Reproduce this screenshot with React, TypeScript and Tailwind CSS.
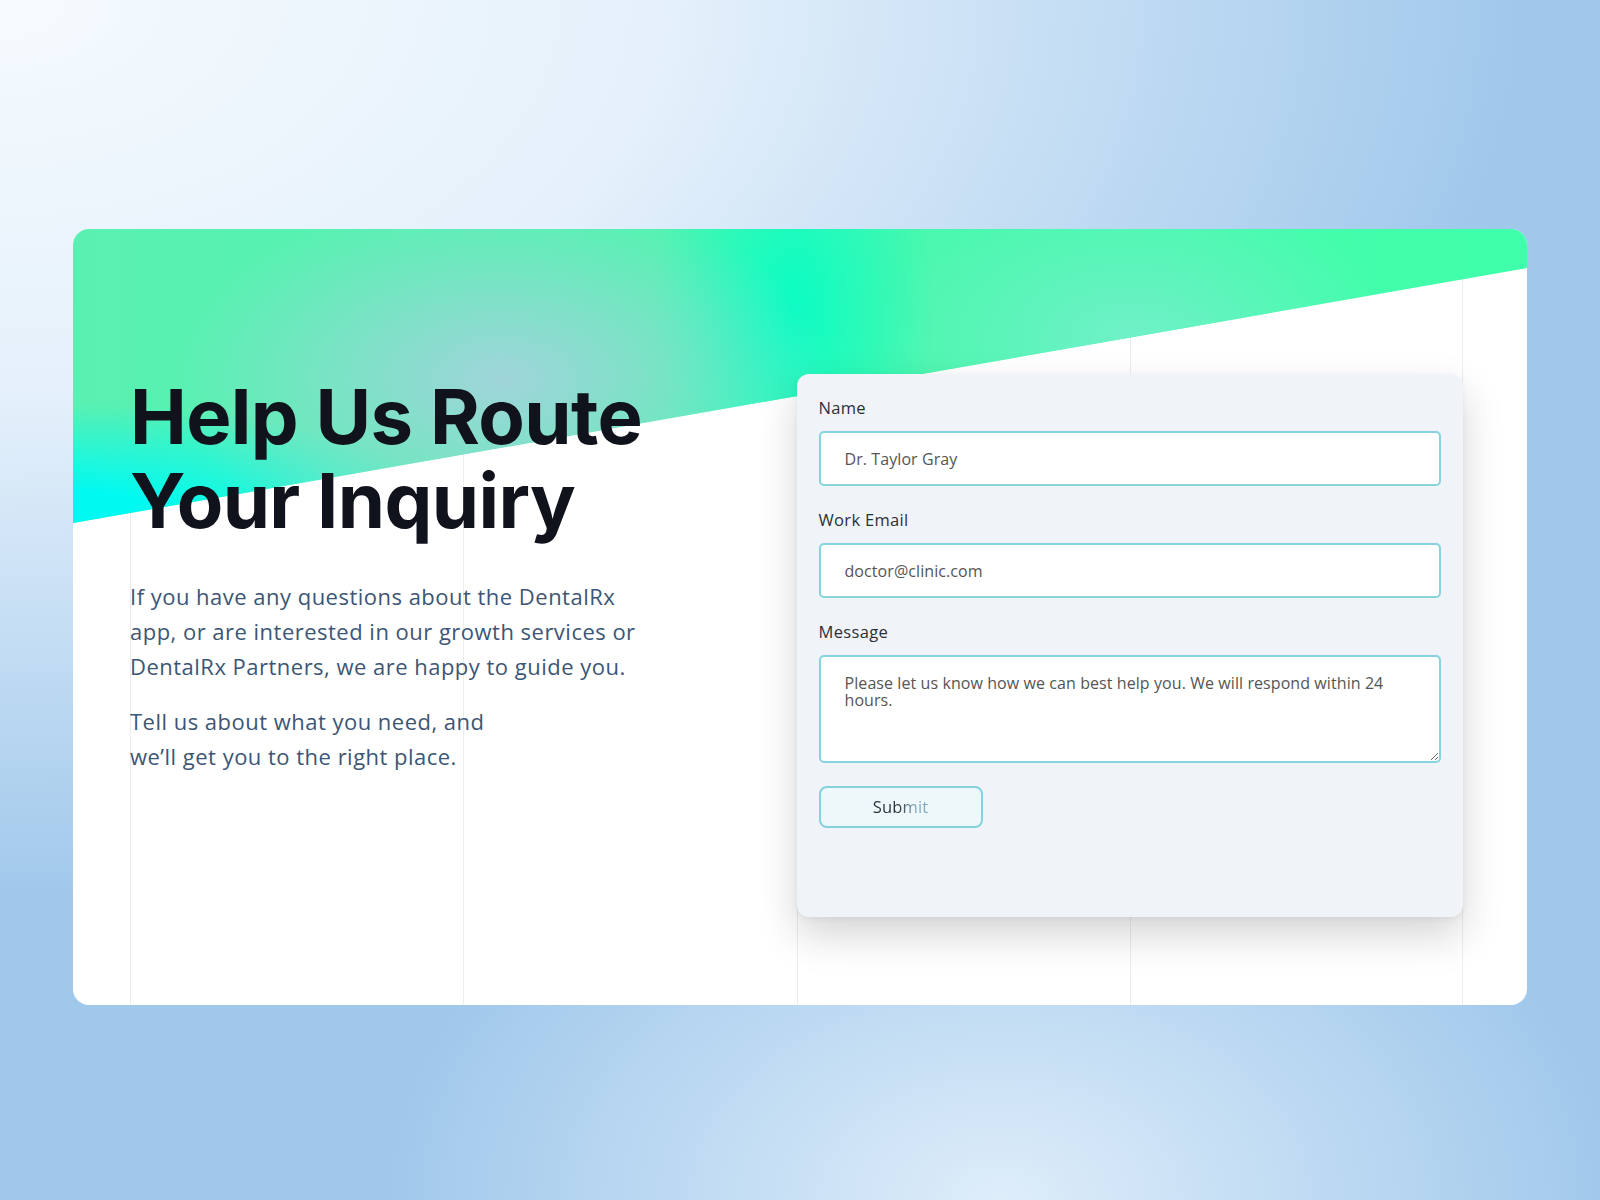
import type { ReactNode } from 'react'

const body = "font-['Open_Sans',sans-serif]"

function Field({ label, children }: { label: string; children: ReactNode }) {
  return (
    <div className="flex flex-col gap-[11px]">
      <label className={`${body} text-[16.5px] leading-6 tracking-[0.02em] text-[#2a2f3a]`}>{label}</label>
      {children}
    </div>
  )
}

const inputCls = `${body} w-full rounded-[5px] border-2 border-[#86d4de] bg-white text-[16px] tracking-[0.005em] text-[#555] outline-none`

export default function App() {
  return (
    <div className="min-h-screen w-full px-[73px] pt-[229px] pb-[195px] [background-image:radial-gradient(ellipse_620px_420px_at_1000px_1200px,rgba(222,237,250,1),rgba(222,237,250,0)),radial-gradient(ellipse_1700px_1000px_at_0px_0px,#f6fbfe_0%,#e4f0fb_40%,#a0c8eb_90%)]">
      <div className="relative h-[776px] overflow-hidden rounded-2xl bg-white">
        {/* column guides */}
        <div className="pointer-events-none absolute inset-y-0 left-[57px] right-[64px] grid grid-cols-4">
          <div className="border-l border-black/[0.07]" />
          <div className="border-l border-black/[0.07]" />
          <div className="border-l border-black/[0.07]" />
          <div className="border-x border-black/[0.07]" />
        </div>

        {/* diagonal gradient band */}
        <div className="absolute inset-x-0 top-0 h-[294px] [clip-path:polygon(0_0,100%_0,100%_39px,0_294px)] [background-image:radial-gradient(ellipse_330px_190px_at_430px_150px,rgba(160,212,218,1)_0%,rgba(160,212,218,0)_100%),radial-gradient(ellipse_380px_110px_at_0px_285px,rgba(0,250,242,1)_20%,rgba(0,250,242,0)_100%),radial-gradient(ellipse_140px_260px_at_720px_80px,rgba(10,253,196,1)_0%,rgba(10,253,196,0)_100%),radial-gradient(ellipse_260px_160px_at_1060px_110px,rgba(112,240,200,1)_0%,rgba(112,240,200,0)_100%),linear-gradient(90deg,#5af0b2_0%,#4ef5ae_45%,#3fffaa_100%)]" />

        <div className="relative grid grid-cols-2 pl-[57px] pr-[64px] pt-[145px]">
          <div>
            <h1 className="font-['Inter',sans-serif] text-[76px] font-bold leading-[84px] tracking-[-0.008em] text-[#10131b]">
              Help Us Route
              <br />
              Your Inquiry
            </h1>
            <div className={`${body} mt-[37px] text-[22px] leading-[35px] tracking-[0.022em] text-[#3d5675]`}>
              <p>
                If you have any questions about the DentalRx
                <br />
                app, or are interested in our growth services or
                <br />
                DentalRx Partners, we are happy to guide you.
              </p>
              <p className="mt-[20px]">
                Tell us about what you need, and
                <br />
                we’ll get you to the right place.
              </p>
            </div>
          </div>

          <form className="flex h-[543px] flex-col gap-[22px] rounded-xl bg-[#f0f4f8] p-[22px] shadow-[0_18px_40px_rgba(0,0,0,0.17),0_2px_6px_rgba(0,0,0,0.05)]">
            <Field label="Name">
              <input type="text" defaultValue="Dr. Taylor Gray" className={`${inputCls} h-[55px] pl-[24px]`} />
            </Field>
            <Field label="Work Email">
              <input type="email" defaultValue="doctor@clinic.com" className={`${inputCls} h-[55px] pl-[24px]`} />
            </Field>
            <Field label="Message">
              <textarea
                defaultValue="Please let us know how we can best help you. We will respond within 24 hours."
                className={`${inputCls} h-[108px] px-[24px] pt-[18px] leading-[17px]`}
              />
            </Field>
            <div className="pt-[1px]">
              <button type="button" className="h-[42px] w-[164px] rounded-lg border-2 border-[#84d2de] bg-[#eef8fa]">
                <span className={`${body} bg-gradient-to-r from-[#2b2f38] from-45% to-[#7fa7bd] to-75% bg-clip-text text-[16.5px] tracking-[0.01em] text-transparent`}>
                  Submit
                </span>
              </button>
            </div>
          </form>
        </div>
      </div>
    </div>
  )
}
